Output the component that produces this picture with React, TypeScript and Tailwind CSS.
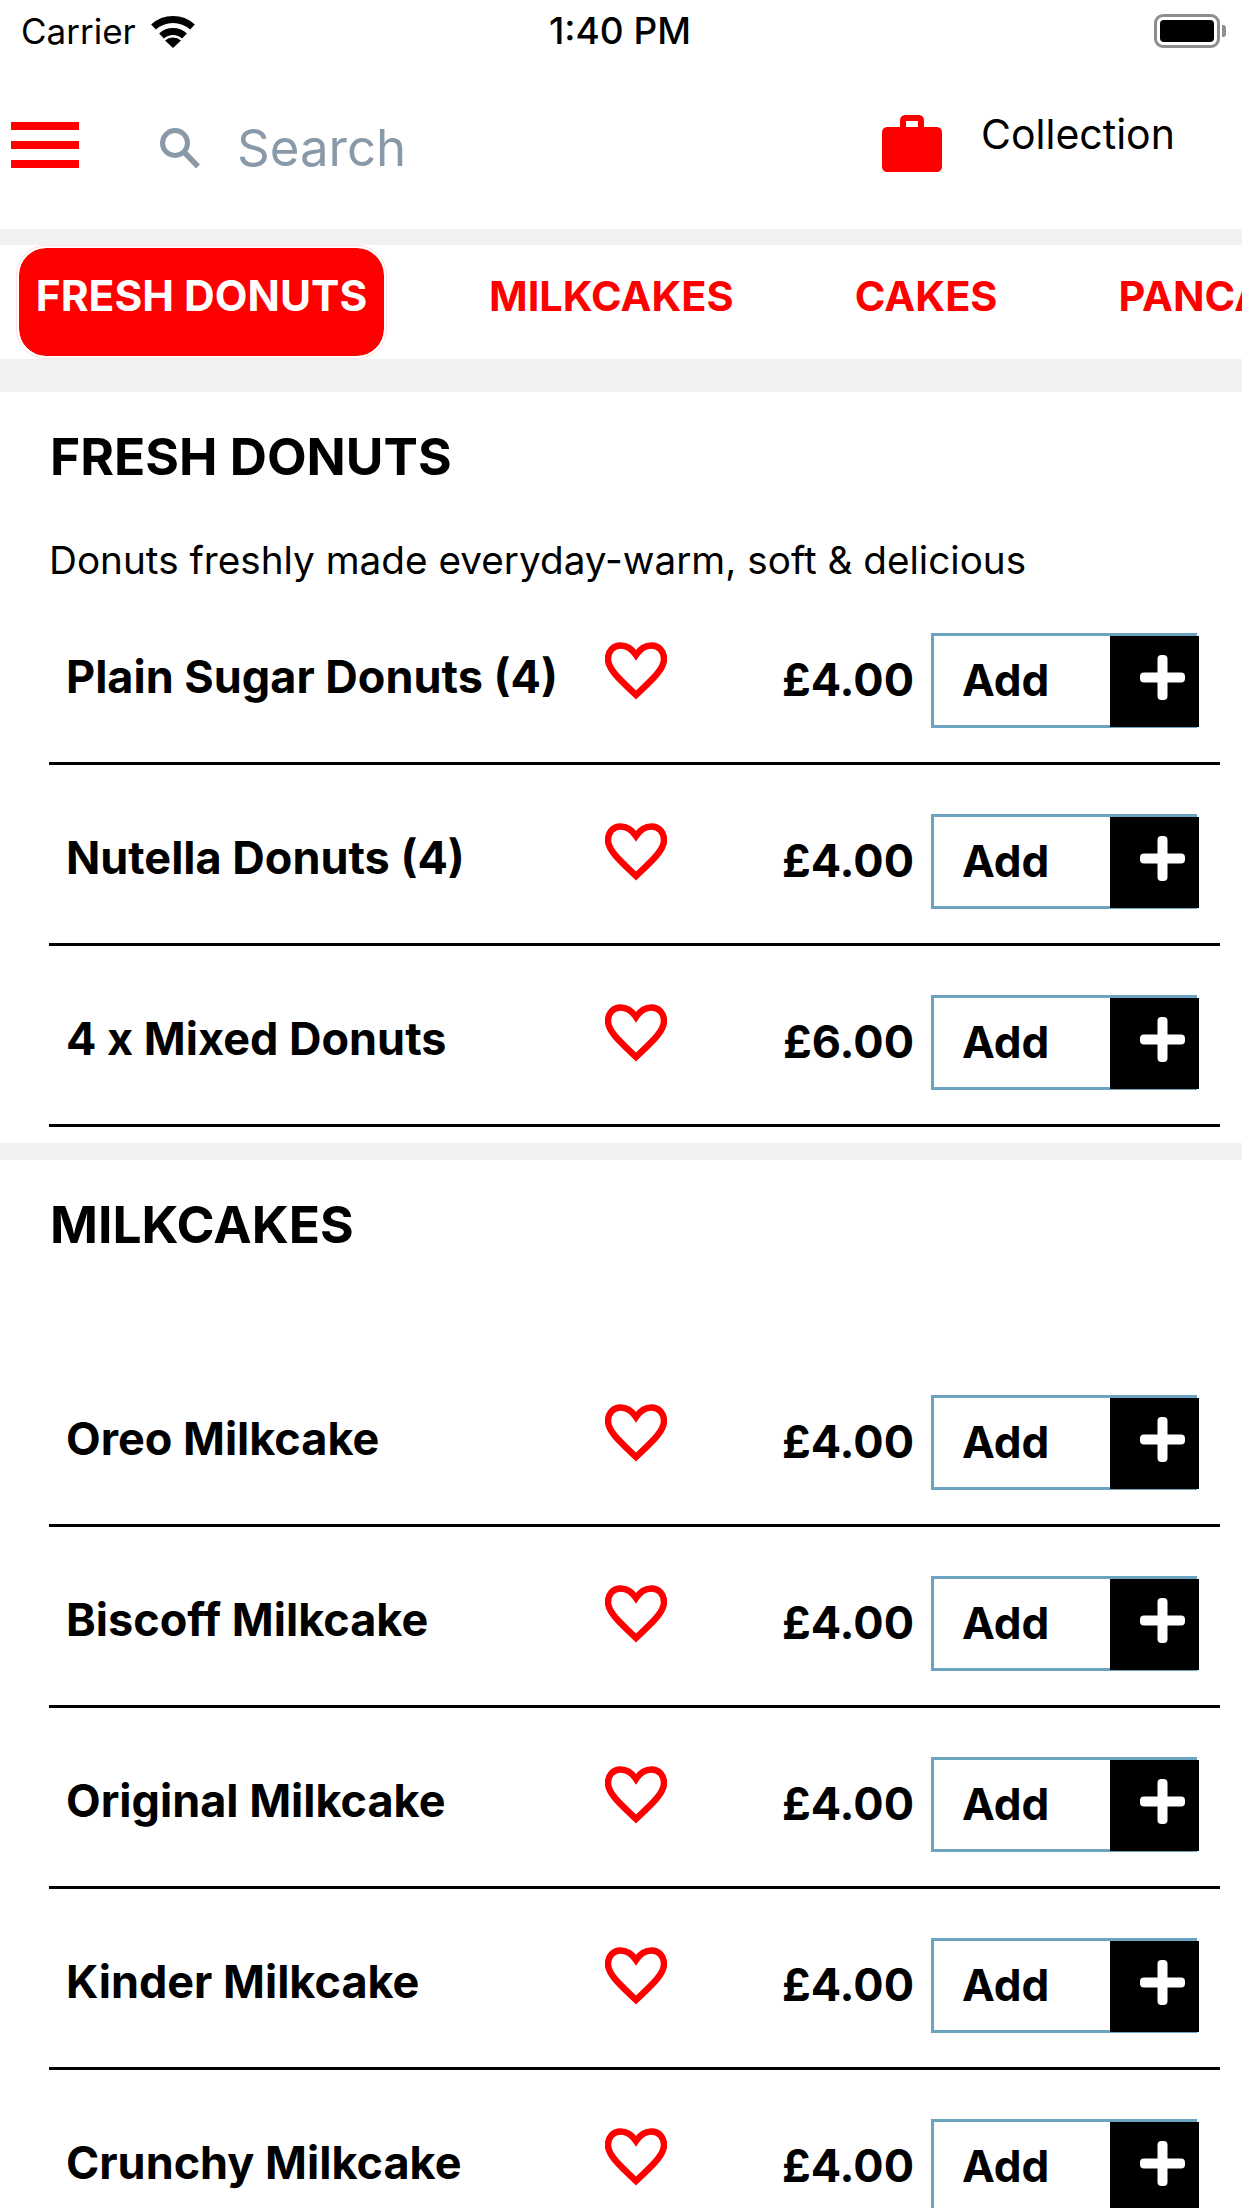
const font = "font-['Inter','Liberation_Sans',sans-serif]";

function Heart() {
  return (
    <svg width="62" height="58" viewBox="0 0 62 58" className="shrink-0">
      <path d="M31 13 C27 7 22 3.500 15.500 3.500 C8 3.500 3 9.500 3 17 C3 27 14 37 31 53 C48 37 59 27 59 17 C59 9.500 54 3.500 46.500 3.500 C40 3.500 35 7 31 13 Z" fill="none" stroke="#ff0000" strokeWidth="6.500" strokeLinejoin="miter" />
    </svg>
  );
}

function Row({ name, price }: { name: string; price: string }) {
  return (
    <div className="flex h-[181px] items-start border-b-[3px] border-black pr-[23px]">
      <div className="mt-[66px] w-[556px] shrink-0 pl-[17px] text-[45px] leading-[54px] font-bold text-black">{name}</div>
      <div className="mt-[58px]"><Heart /></div>
      <div className="mt-[69px] ml-auto text-[45px] leading-[54px] font-bold text-black">{price}</div>
      <div className="relative mt-[49px] ml-[17px] flex h-[95px] w-[266px] shrink-0 items-center border-[3px] border-[#6ba3c1] pb-[2px] pl-[28px] text-[44px] font-bold text-black">
        Add
        <div className="absolute top-0 right-[-5px] bottom-[-2px] flex w-[89px] items-center justify-center bg-black pb-[9px] pl-[15px]">
          <svg width="45" height="45" viewBox="0 0 45 45"><rect x="17.500" y="0" width="10" height="45" rx="4" fill="#fff" /><rect x="0" y="17.500" width="45" height="10" rx="4" fill="#fff" /></svg>
        </div>
      </div>
    </div>
  );
}

function Section({ title, desc, rows, topGap }: { title: string; desc?: string; rows: [string, string][]; topGap: number }) {
  return (
    <section className="bg-white pb-[16px]">
      <div className="pl-[50px] pt-[33px] text-[51.500px] leading-[62px] font-bold text-black">{title}</div>
      {desc ? <div className="pl-[49px] pt-[49px] text-[38.700px] leading-[48px] text-black">{desc}</div> : null}
      <div className="mr-[22px] ml-[49px]" style={{ marginTop: topGap }}>
        {rows.map(([n, p]) => <Row key={n} name={n} price={p} />)}
      </div>
    </section>
  );
}

export default function App() {
  return (
    <div className={`${font} h-[2208px] w-[1242px] overflow-hidden bg-[#f1f1f1]`}>
      <div className="bg-white">
        <div className="relative flex h-[60px] items-center justify-between pr-[16px] pl-[21px] text-[35px] text-black">
          <div className="flex items-center gap-[14px] pt-[2px]">
            <span>Carrier</span>
            <svg width="46" height="33" viewBox="0 0 46 33">
              <path d="M3.500 12 A29 29 0 0 1 42.500 12" fill="none" stroke="#000" strokeWidth="7" />
              <path d="M11.500 21 A17 17 0 0 1 34.500 21" fill="none" stroke="#000" strokeWidth="7" />
              <path d="M23 33 L15 25.500 A12 12 0 0 1 31 25.500 Z" fill="#000" />
            </svg>
          </div>
          <div className="absolute left-[549px] pt-[2px] text-[37px] font-medium">1:40 PM</div>
          <div className="flex items-center gap-[2px] pt-[1px]">
            <div className="flex h-[34px] w-[66px] items-center rounded-[9px] border-[3px] border-[#8e8e8e] p-[3px]"><div className="h-full w-full rounded-[4px] bg-black" /></div>
            <div className="h-[12px] w-[4px] rounded-r-[3px] bg-[#8e8e8e]" />
          </div>
        </div>
        <div className="flex h-[169px] items-start">
          <div className="mt-[62px] ml-[11px] flex h-[46px] w-[68px] flex-col justify-between">
            <div className="h-[8px] bg-[#ff0000]" /><div className="h-[8px] bg-[#ff0000]" /><div className="h-[8px] bg-[#ff0000]" />
          </div>
          <svg className="mt-[68px] ml-[81px]" width="40" height="40" viewBox="0 0 40 40"><circle cx="15" cy="15" r="12.500" fill="none" stroke="#8a99a8" strokeWidth="5" /><path d="M24 24 L38 38.500" stroke="#8a99a8" strokeWidth="5.500" /></svg>
          <div className="mt-[55px] ml-[37px] w-[641px] shrink-0 text-[51px] leading-[66px] text-[#8a99a8]">Search</div>
          <svg className="mt-[55px] ml-[4px]" width="60" height="57" viewBox="0 0 60 57"><path d="M18 12 V6 C18 2 20 0 24 0 H36 C40 0 42 2 42 6 V12 H54 C58 12 60 14 60 18 V51 C60 55 58 57 54 57 H6 C2 57 0 55 0 51 V18 C0 14 2 12 6 12 Z M24 6 V12 H36 V6 Z" fill="#ff0000" fillRule="evenodd" /></svg>
          <div className="mt-[50px] ml-[39px] text-[41px] leading-[48px] text-black">Collection</div>
        </div>
      </div>
      <div className="mt-[16px] flex h-[114px] items-center overflow-hidden whitespace-nowrap bg-white text-[41.500px] font-bold text-[#ff0000]">
        <div className="ml-[16px] box-border flex h-[114px] w-[371px] shrink-0 items-start justify-center rounded-[30px] border-[3px] border-white bg-[#ff0000] bg-clip-padding pt-[23px] text-[42.500px] leading-[50px] text-white outline-1 -outline-offset-1 outline-[#ffdede]">FRESH DONUTS</div>
        <div className="ml-[102px] -translate-y-[6px]">MILKCAKES</div>
        <div className="ml-[121px] -translate-y-[6px]">CAKES</div>
        <div className="ml-[121px] -translate-y-[6px]">PANCAKES</div>
      </div>
      <div className="mt-[33px]">
        <Section title="FRESH DONUTS" desc="Donuts freshly made everyday-warm, soft & delicious" topGap={0}
          rows={[["Plain Sugar Donuts (4)", "£4.00"], ["Nutella Donuts (4)", "£4.00"], ["4 x Mixed Donuts", "£6.00"]]} />
      </div>
      <div className="mt-[17px]">
        <Section title="MILKCAKES" topGap={91}
          rows={[["Oreo Milkcake", "£4.00"], ["Biscoff Milkcake", "£4.00"], ["Original Milkcake", "£4.00"], ["Kinder Milkcake", "£4.00"], ["Crunchy Milkcake", "£4.00"]]} />
      </div>
    </div>
  );
}
